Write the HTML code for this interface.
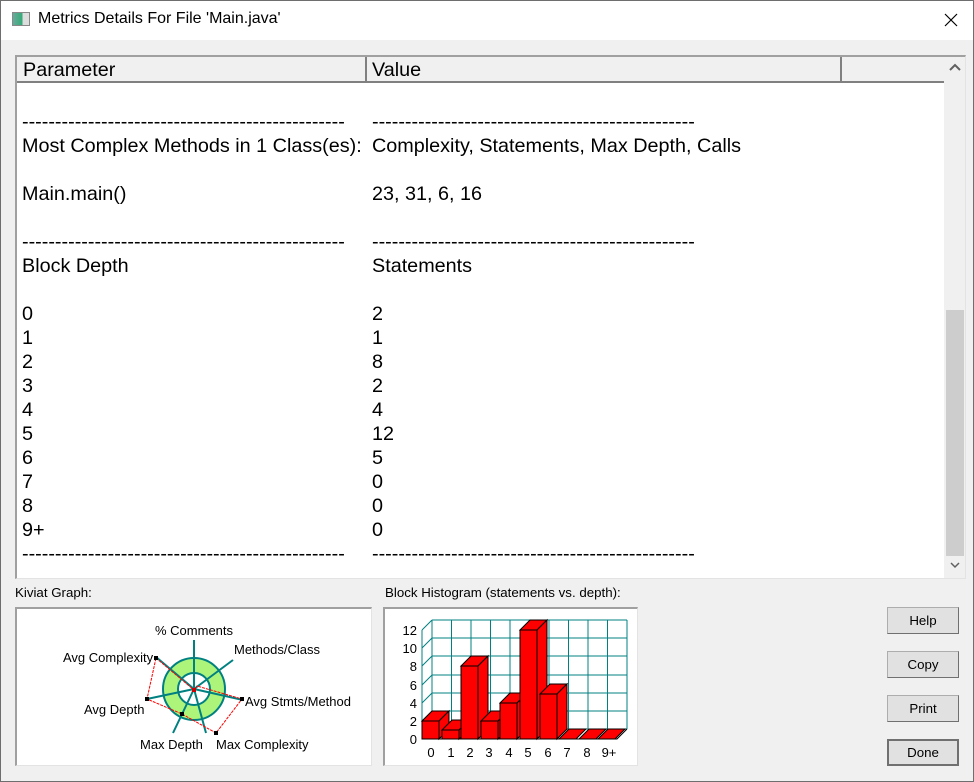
<!DOCTYPE html>
<html><head><meta charset="utf-8"><style>
*{margin:0;padding:0;box-sizing:border-box}
body{width:974px;height:782px;overflow:hidden;background:#f0f0f0;font-family:"Liberation Sans",Arial,sans-serif;position:relative}
.a{position:absolute;white-space:nowrap}
.t{font-size:19.8px;line-height:24px;color:#000}
.s{font-size:13.3px;color:#000}
.btn{position:absolute;left:887px;width:72px;height:27px;background:#e1e1e1;border:1px solid #adadad;border-right-color:#707070;border-bottom-color:#707070;font-size:13.3px;text-align:center;line-height:25px}
</style></head><body>
<div class="a" style="left:0;top:0;width:974px;height:782px;border:1px solid #6e6e6e;"></div>
<div class="a" style="left:1px;top:1px;width:972px;height:39px;background:#fff"></div>
<div class="a" style="left:12px;top:12px;width:18px;height:14px;background:linear-gradient(90deg,#6a9 0,#3a7 60%,#ddd 60%);border:1px solid #888"></div>
<div class="a" style="left:38px;top:10px;font-size:16px;color:#000">Metrics Details For File 'Main.java'</div>
<svg class="a" style="left:944px;top:13px" width="14" height="14"><path d="M1 1L13 13M13 1L1 13" stroke="#000" stroke-width="1.2"/></svg>

<div class="a" style="left:15px;top:55px;width:951px;height:524px;background:#fff;border-top:2px solid #a0a0a0;border-left:2px solid #a0a0a0;border-right:1px solid #e3e3e3;border-bottom:1px solid #e3e3e3"></div>
<div class="a" style="left:17px;top:57px;width:927px;height:26px;background:#f0f0f0;border-bottom:2px solid #808080"></div>
<div class="a" style="left:365px;top:57px;width:2px;height:25px;background:#808080"></div>
<div class="a" style="left:840px;top:57px;width:2px;height:25px;background:#808080"></div>
<div class="a t" style="left:23px;top:58px">Parameter</div>
<div class="a t" style="left:372px;top:58px">Value</div>
<div class="a" style="left:944px;top:57px;width:21px;height:521px;background:#f0f0f0"></div>
<div class="a" style="left:946px;top:310px;width:18px;height:246px;background:#cdcdcd"></div>
<svg class="a" style="left:948px;top:63px" width="14" height="10"><path d="M2 7L7 2L12 7" stroke="#606060" stroke-width="2" fill="none"/></svg>
<svg class="a" style="left:948px;top:561px" width="14" height="10"><path d="M3 2L7 6L11 2" stroke="#606060" stroke-width="1.5" fill="none"/></svg>

<div class="a t" style="left:22px;top:110px">-------------------------------------------------</div>
<div class="a t" style="left:372px;top:110px">-------------------------------------------------</div>
<div class="a t" style="left:22px;top:134px">Most Complex Methods in 1 Class(es):</div>
<div class="a t" style="left:372px;top:134px">Complexity, Statements, Max Depth, Calls</div>
<div class="a t" style="left:22px;top:182px">Main.main()</div>
<div class="a t" style="left:372px;top:182px">23, 31, 6, 16</div>
<div class="a t" style="left:22px;top:230px">-------------------------------------------------</div>
<div class="a t" style="left:372px;top:230px">-------------------------------------------------</div>
<div class="a t" style="left:22px;top:254px">Block Depth</div>
<div class="a t" style="left:372px;top:254px">Statements</div>
<div class="a t" style="left:22px;top:302px">0<br>1<br>2<br>3<br>4<br>5<br>6<br>7<br>8<br>9+</div>
<div class="a t" style="left:372px;top:302px">2<br>1<br>8<br>2<br>4<br>12<br>5<br>0<br>0<br>0</div>
<div class="a t" style="left:22px;top:542px">-------------------------------------------------</div>
<div class="a t" style="left:372px;top:542px">-------------------------------------------------</div>

<div class="a s" style="left:15px;top:585px">Kiviat Graph:</div>
<div class="a s" style="left:385px;top:585px">Block Histogram (statements vs. depth):</div>
<div class="a" style="left:15px;top:607px;width:357px;height:159px;background:#fff;border-top:2px solid #a0a0a0;border-left:2px solid #a0a0a0;border-right:1px solid #e3e3e3;border-bottom:1px solid #e3e3e3"></div>
<div class="a" style="left:383px;top:607px;width:255px;height:159px;background:#fff;border-top:2px solid #a0a0a0;border-left:2px solid #a0a0a0;border-right:1px solid #e3e3e3;border-bottom:1px solid #e3e3e3"></div>

<svg class="a" style="left:0;top:0" width="974" height="782" font-family="Liberation Sans,Arial,sans-serif" font-size="13">
<circle cx="194" cy="689" r="23.5" fill="none" stroke="#adf57a" stroke-width="15"/>
<circle cx="194" cy="689" r="31" fill="none" stroke="#008080" stroke-width="2"/>
<circle cx="194" cy="689" r="16" fill="none" stroke="#008080" stroke-width="2"/>
<g stroke="#008080" stroke-width="2">
<line x1="194" y1="689" x2="194" y2="640"/><line x1="194" y1="689" x2="233" y2="660"/><line x1="194" y1="689" x2="243" y2="700"/>
<line x1="194" y1="689" x2="206" y2="733"/><line x1="194" y1="689" x2="173" y2="733"/><line x1="194" y1="689" x2="147" y2="699"/><line x1="194" y1="689" x2="156" y2="657"/></g>
<polygon points="156,658 194,690 197,686 242,699 216,733 182,714 147,699" fill="none" stroke="#f00" stroke-width="1" stroke-dasharray="3,1"/>
<g fill="#000"><rect x="154" y="656" width="4" height="4"/><rect x="240" y="697" width="4" height="4"/><rect x="214" y="731" width="4" height="4"/><rect x="180" y="712" width="4" height="4"/><rect x="145" y="697" width="4" height="4"/><rect x="192" y="688" width="4" height="4" fill="#c00"/></g>
<text x="155" y="635">% Comments</text><text x="234" y="654">Methods/Class</text><text x="63" y="662">Avg Complexity</text>
<text x="245" y="706">Avg Stmts/Method</text><text x="84" y="714">Avg Depth</text><text x="140" y="749">Max Depth</text><text x="216" y="749">Max Complexity</text>

<g stroke="#008080" stroke-width="1" fill="none">
<path d="M432 620V729M451.5 620V729M471 620V729M490.5 620V729M510 620V729M529.5 620V729M549 620V729M568.5 620V729M588 620V729M607.5 620V729M627 620V729"/>
<path d="M432 620H627M432 638H627M432 656H627M432 675H627M432 693H627M432 711H627M432 729H627"/>
<path d="M422 630L432 620M422 648L432 638M422 666L432 656M422 685L432 675M422 703L432 693M422 721L432 711M422 739L432 729"/>
<path d="M422 630V739"/>
</g>
<path d="M422 739H617L627 729" stroke="#000" fill="none"/>
<g font-size="13" text-anchor="end"><text x="417" y="635">12</text><text x="417" y="653">10</text><text x="417" y="671">8</text><text x="417" y="690">6</text><text x="417" y="708">4</text><text x="417" y="726">2</text><text x="417" y="744">0</text></g>
<g fill="#f00" stroke="#000" stroke-width="1">
<rect x="422" y="721" width="17" height="18"/><polygon points="422,721 432,711 449,711 439,721"/><polygon points="439,721 449,711 449,729 439,739"/>
<rect x="442" y="730" width="17" height="9"/><polygon points="442,730 452,720 469,720 459,730"/><polygon points="459,730 469,720 469,729 459,739"/>
<rect x="461" y="666" width="17" height="73"/><polygon points="461,666 471,656 488,656 478,666"/><polygon points="478,666 488,656 488,729 478,739"/>
<rect x="481" y="721" width="17" height="18"/><polygon points="481,721 491,711 508,711 498,721"/><polygon points="498,721 508,711 508,729 498,739"/>
<rect x="500" y="703" width="17" height="36"/><polygon points="500,703 510,693 527,693 517,703"/><polygon points="517,703 527,693 527,729 517,739"/>
<rect x="520" y="630" width="17" height="109"/><polygon points="520,630 530,620 547,620 537,630"/><polygon points="537,630 547,620 547,729 537,739"/>
<rect x="540" y="694" width="17" height="45"/><polygon points="540,694 550,684 567,684 557,694"/><polygon points="557,694 567,684 567,729 557,739"/>
<polygon points="559,739 569,729 586,729 576,739"/><polygon points="579,739 589,729 606,729 596,739"/><polygon points="598,739 608,729 625,729 615,739"/>
</g>
<g font-size="13" text-anchor="middle"><text x="431" y="757">0</text><text x="451" y="757">1</text><text x="470" y="757">2</text><text x="489" y="757">3</text><text x="509" y="757">4</text><text x="528" y="757">5</text><text x="548" y="757">6</text><text x="567" y="757">7</text><text x="587" y="757">8</text><text x="609" y="757">9+</text></g>
</svg>

<div class="btn" style="top:607px">Help</div>
<div class="btn" style="top:651px">Copy</div>
<div class="btn" style="top:695px">Print</div>
<div class="btn" style="top:739px;border:2px solid #707070;line-height:23px">Done</div>
</body></html>
